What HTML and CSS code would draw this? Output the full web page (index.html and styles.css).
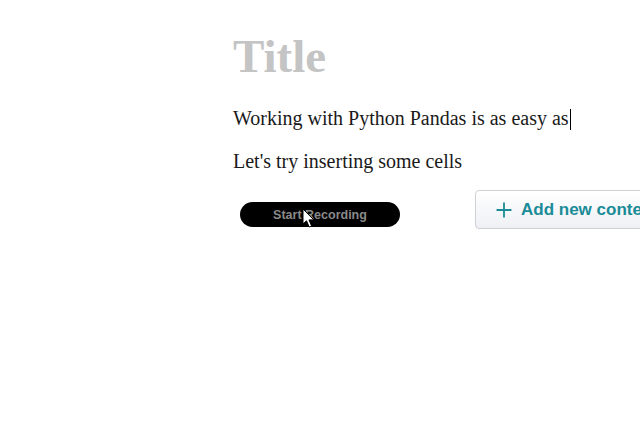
FILE: index.html
```html
<!DOCTYPE html>
<html>
<head>
<meta charset="utf-8">
<link rel="stylesheet" href="styles.css">
</head>
<body>
<div class="page">
  <h1 class="title">Title</h1>
  <p class="line first">Working with Python Pandas is as easy as<span class="caret"></span></p>
  <p class="line">Let's try inserting some cells</p>
  <div class="actions">
    <div class="rec-wrap">
      <button class="rec">Start Recording</button>
      <svg class="cursor" width="14" height="21" viewBox="0 0 14 21">
        <path d="M1 1 L1 16 L4.5 12.8 L7.2 19 L9.6 18 L7 11.9 L11.8 11.9 Z" fill="#fff" stroke="#000" stroke-width="1" stroke-linejoin="round"/>
      </svg>
    </div>
    <button class="add">
      <svg class="plus" width="16" height="16" viewBox="0 0 16 16"><path d="M8 0.5 V15.5 M0.5 8 H15.5" stroke="currentColor" stroke-width="1.8" fill="none"/></svg>
      <span>Add new content</span>
    </button>
  </div>
</div>
</body>
</html>
```

FILE: styles.css
```css
html, body {
  margin: 0;
  padding: 0;
  background: #fff;
  overflow: hidden;
}
.page {
  padding: 28px 0 0 233px;
  width: 640px;
  box-sizing: border-box;
  font-family: "Liberation Serif", "Times New Roman", serif;
  color: #1a1a1a;
}
.title {
  margin: 0;
  font-size: 47px;
  line-height: 56px;
  font-weight: bold;
  color: #c4c4c4;
}
.line {
  margin: 19px 0 0;
  font-size: 20px;
  line-height: 24px;
  white-space: nowrap;
}
.line.first {
  margin-top: 22px;
}
.caret {
  display: inline-block;
  width: 1px;
  height: 21px;
  background: #000;
  vertical-align: -5px;
  margin-left: 1px;
}
.actions {
  display: flex;
  align-items: flex-start;
  margin-top: 17px;
  white-space: nowrap;
}
.rec-wrap {
  position: relative;
  margin: 12px 0 0 7px;
}
.rec {
  display: block;
  width: 160px;
  height: 25px;
  border: none;
  border-radius: 13px;
  background: #000;
  color: #8a8a8a;
  font-family: "Liberation Sans", Arial, sans-serif;
  font-weight: bold;
  font-size: 12.5px;
  padding: 0;
}
.cursor {
  position: absolute;
  left: 62px;
  top: 6px;
}
.add {
  margin-left: 75px;
  height: 39px;
  width: 240px;
  flex: none;
  display: flex;
  align-items: center;
  gap: 9px;
  padding: 0 0 0 20px;
  border: 1px solid #cfd0d3;
  border-radius: 4px;
  background: linear-gradient(#ffffff, #eef0f4);
  color: #1a8c98;
  font-family: "Liberation Sans", Arial, sans-serif;
  font-weight: bold;
  font-size: 17px;
}
.plus {
  flex: none;
}
```
